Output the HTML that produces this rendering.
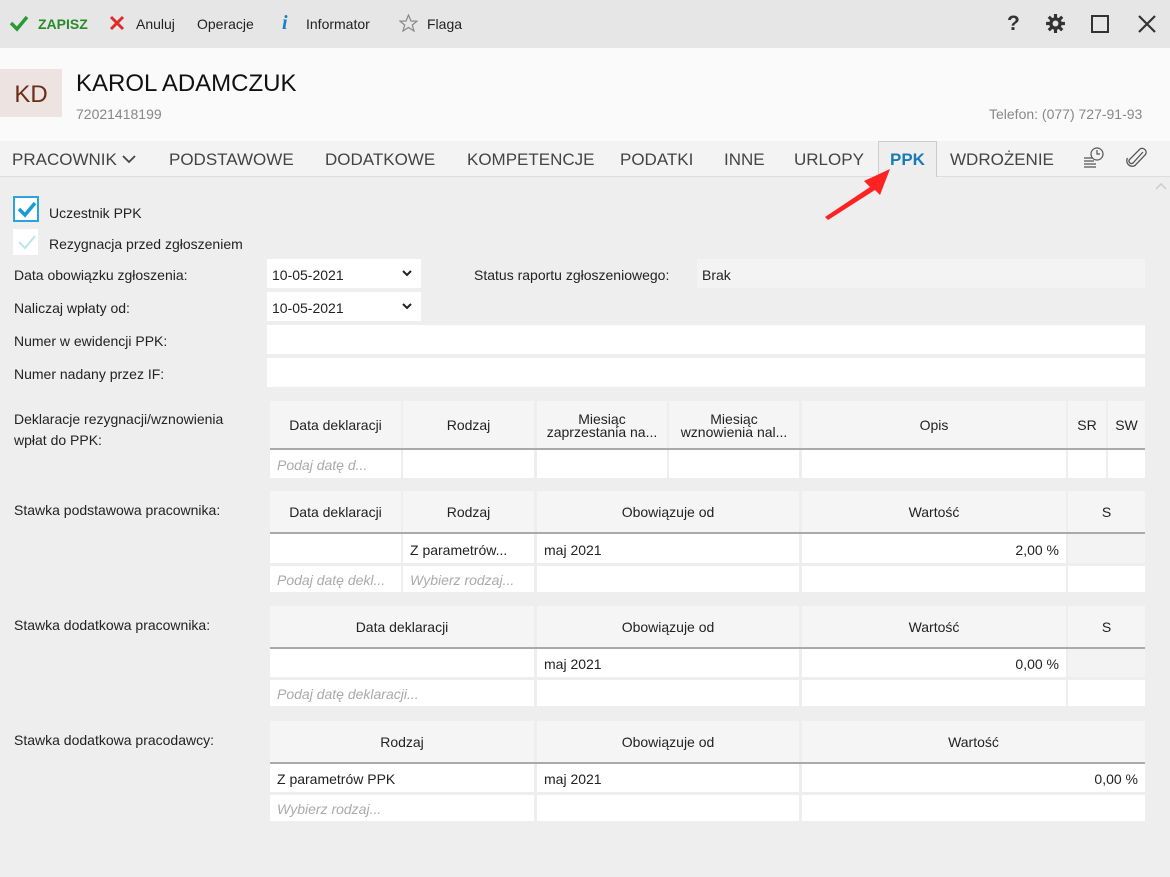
<!DOCTYPE html>
<html><head><meta charset="utf-8"><style>
*{box-sizing:border-box;margin:0;padding:0}
body{width:1170px;height:877px;background:#eeeeee;font-family:"Liberation Sans",sans-serif;font-size:14px;color:#222;position:relative;overflow:hidden}
.a{position:absolute;white-space:nowrap}
.tb{left:0;top:0;width:1170px;height:48px;background:#e6e6e6}
.hd{left:0;top:48px;width:1170px;height:93px;background:#fafafa}
.tabs{left:0;top:141px;width:1170px;height:36px;background:#f3f3f3;border-bottom:1px solid #ddd}
.tab{top:150px;font-size:17px;color:#444}
.c{position:absolute;background:#fff;overflow:hidden;white-space:nowrap;padding:0 7px;display:flex;align-items:center;padding-top:2px}
.h{background:#f5f5f5;justify-content:center;text-align:center;line-height:13px}
.ln{position:absolute;height:2px;background:#aaa}
.ph{color:#aaa;font-style:italic}
.r{justify-content:flex-end}
.g{background:#f3f3f3}
.inp{position:absolute;background:#fff;padding-left:5px;display:flex;align-items:center;padding-top:2px}
</style></head><body>
<div class="a tb"></div>
<svg class="a" style="left:9px;top:14px" width="20" height="18"><path d="M2 9 L8 15 L18 3" stroke="#2a9a35" stroke-width="3.5" fill="none"/></svg>
<div class="a" style="left:38px;top:16px;color:#2a8a2a;font-weight:bold">ZAPISZ</div>
<svg class="a" style="left:109px;top:15px" width="16" height="16"><path d="M2 2L14 14M14 2L2 14" stroke="#e02b2b" stroke-width="3"/></svg>
<div class="a" style="left:136px;top:16px">Anuluj</div>
<div class="a" style="left:197px;top:16px">Operacje</div>
<div class="a" style="left:282px;top:12px;color:#1a7ec0;font-family:'Liberation Serif',serif;font-style:italic;font-weight:bold;font-size:20px">i</div>
<div class="a" style="left:306px;top:16px">Informator</div>
<svg class="a" style="left:399px;top:14px" width="19" height="18"><path d="M9.5 1 L12 7 L18 7.2 L13.3 11 L15 17 L9.5 13.5 L4 17 L5.7 11 L1 7.2 L7 7 Z" stroke="#888" stroke-width="1.2" fill="none"/></svg>
<div class="a" style="left:427px;top:16px">Flaga</div>
<div class="a" style="left:1007px;top:12px;font-size:21px;color:#333;font-weight:bold">?</div>
<svg class="a" style="left:1045px;top:13px" width="21" height="21" viewBox="0 0 20 20"><g stroke="#333" stroke-width="3"><path d="M10 1V19M1 10H19M3.6 3.6L16.4 16.4M16.4 3.6L3.6 16.4"/></g><circle cx="10" cy="10" r="6" fill="#333"/><circle cx="10" cy="10" r="2.8" fill="#e6e6e6"/></svg>
<div class="a" style="left:1091px;top:15px;width:18px;height:18px;border:2.5px solid #333"></div>
<svg class="a" style="left:1138px;top:15px" width="18" height="18"><path d="M1 1L17 17M17 1L1 17" stroke="#333" stroke-width="2.2"/></svg>

<div class="a hd"></div>
<div class="a" style="left:0;top:69px;width:62px;height:48px;background:#ede3e0;color:#6a2e17;font-size:24px;display:flex;align-items:center;justify-content:center;padding-top:4px">KD</div>
<div class="a" style="left:76px;top:70px;font-size:24px;color:#111">KAROL ADAMCZUK</div>
<div class="a" style="left:76px;top:106px;color:#888">72021418199</div>
<div class="a" style="left:989px;top:106px;color:#888">Telefon: (077) 727-91-93</div>

<div class="a tabs"></div>
<div class="a tab" style="left:12px">PRACOWNIK</div>
<svg class="a" style="left:122px;top:155px" width="14" height="9"><path d="M1 1L7 7L13 1" stroke="#444" stroke-width="1.8" fill="none"/></svg>
<div class="a tab" style="left:169px">PODSTAWOWE</div>
<div class="a tab" style="left:325px">DODATKOWE</div>
<div class="a tab" style="left:467px">KOMPETENCJE</div>
<div class="a tab" style="left:620px">PODATKI</div>
<div class="a tab" style="left:724px">INNE</div>
<div class="a tab" style="left:794px">URLOPY</div>
<div class="a" style="left:878px;top:141px;width:59px;height:36px;background:#eeeeee;border:1px solid #ccc;border-bottom:none"></div>
<div class="a tab" style="left:890px;color:#1a7ab5;font-weight:bold">PPK</div>
<div class="a tab" style="left:950px">WDROŻENIE</div>
<svg class="a" style="left:1082px;top:146px" width="24" height="24"><g stroke="#555" stroke-width="1.2" fill="none"><circle cx="15" cy="8" r="6"/><path d="M15 4V8H18M2 12H10M2 15H12M2 18H14M2 21H14"/></g></svg>
<svg class="a" style="left:1125px;top:146px" width="24" height="24"><path d="M18 6 L8 17 A2.5 2.5 0 0 1 4.5 13.5 L15 3 A4 4 0 0 1 20.5 8.5 L10 19.5 A5.5 5.5 0 0 1 2.5 12" stroke="#555" stroke-width="1.3" fill="none"/></svg>
<svg class="a" style="left:1155px;top:182px" width="12" height="8"><path d="M1 7L6 2L11 7" stroke="#ccc" stroke-width="1.5" fill="none"/></svg>
<svg class="a" style="left:820px;top:165px" width="75" height="55"><path d="M5 52 L50 22 L44 16 L70 4 L60 30 L55 25 L8 55 Z" fill="#f22"/></svg>

<div class="a" style="left:13px;top:196px;width:26px;height:26px;border:2px solid #2aa3de;background:#fff"></div>
<svg class="a" style="left:17px;top:200px" width="20" height="18"><path d="M2 9L8 15L18 3" stroke="#1a9ad6" stroke-width="3.5" fill="none"/></svg>
<div class="a" style="left:49px;top:205px">Uczestnik PPK</div>
<div class="a" style="left:13px;top:229px;width:25px;height:26px;background:#fff"></div>
<svg class="a" style="left:17px;top:233px" width="20" height="18"><path d="M2 9L8 15L18 3" stroke="#bde3f2" stroke-width="2" fill="none"/></svg>
<div class="a" style="left:49px;top:236px">Rezygnacja przed zgłoszeniem</div>

<div class="a" style="left:14px;top:267px">Data obowiązku zgłoszenia:</div>
<div class="inp" style="left:267px;top:259px;width:154px;height:29px">10-05-2021</div>
<svg class="a" style="left:402px;top:270px" width="10" height="7"><path d="M1 1L5 5L9 1" stroke="#222" stroke-width="2" fill="none"/></svg>
<div class="a" style="left:474px;top:267px">Status raportu zgłoszeniowego:</div>
<div class="inp" style="left:697px;top:259px;width:448px;height:29px;background:#f3f3f3">Brak</div>
<div class="a" style="left:14px;top:300px">Naliczaj wpłaty od:</div>
<div class="inp" style="left:267px;top:292px;width:154px;height:29px">10-05-2021</div>
<svg class="a" style="left:402px;top:303px" width="10" height="7"><path d="M1 1L5 5L9 1" stroke="#222" stroke-width="2" fill="none"/></svg>
<div class="a" style="left:14px;top:333px">Numer w ewidencji PPK:</div>
<div class="inp" style="left:267px;top:325px;width:878px;height:29px"></div>
<div class="a" style="left:14px;top:366px">Numer nadany przez IF:</div>
<div class="inp" style="left:267px;top:358px;width:878px;height:29px"></div>

<div class="a" style="left:14px;top:409px;line-height:21px">Deklaracje rezygnacji/wznowienia<br>wpłat do PPK:</div>
<div class="c h" style="left:270px;top:401px;width:131px;height:47px">Data deklaracji</div>
<div class="c h" style="left:403px;top:401px;width:131px;height:47px">Rodzaj</div>
<div class="c h" style="left:537px;top:401px;width:130px;height:47px">Miesiąc<br>zaprzestania na...</div>
<div class="c h" style="left:669px;top:401px;width:130px;height:47px">Miesiąc<br>wznowienia nal...</div>
<div class="c h" style="left:802px;top:401px;width:264px;height:47px">Opis</div>
<div class="c h" style="left:1068px;top:401px;width:38px;height:47px">SR</div>
<div class="c h" style="left:1108px;top:401px;width:37px;height:47px">SW</div>
<div class="ln" style="left:270px;top:448px;width:875px"></div>
<div class="c ph" style="left:270px;top:450px;width:131px;height:28px">Podaj datę d...</div>
<div class="c" style="left:403px;top:450px;width:131px;height:28px"></div>
<div class="c" style="left:537px;top:450px;width:130px;height:28px"></div>
<div class="c" style="left:669px;top:450px;width:130px;height:28px"></div>
<div class="c" style="left:802px;top:450px;width:264px;height:28px"></div>
<div class="c" style="left:1068px;top:450px;width:38px;height:28px"></div>
<div class="c" style="left:1108px;top:450px;width:37px;height:28px"></div>

<div class="a" style="left:14px;top:502px">Stawka podstawowa pracownika:</div>
<div class="c h" style="left:270px;top:491px;width:131px;height:41px">Data deklaracji</div>
<div class="c h" style="left:403px;top:491px;width:131px;height:41px">Rodzaj</div>
<div class="c h" style="left:537px;top:491px;width:262px;height:41px">Obowiązuje od</div>
<div class="c h" style="left:802px;top:491px;width:264px;height:41px">Wartość</div>
<div class="c h" style="left:1068px;top:491px;width:77px;height:41px">S</div>
<div class="ln" style="left:270px;top:532px;width:875px"></div>
<div class="c" style="left:270px;top:534px;width:131px;height:29px"></div>
<div class="c" style="left:403px;top:534px;width:131px;height:29px">Z parametrów...</div>
<div class="c" style="left:537px;top:534px;width:262px;height:29px">maj 2021</div>
<div class="c r" style="left:802px;top:534px;width:264px;height:29px">2,00 %</div>
<div class="c g" style="left:1068px;top:534px;width:77px;height:29px"></div>
<div class="c ph" style="left:270px;top:566px;width:131px;height:26px">Podaj datę dekl...</div>
<div class="c ph" style="left:403px;top:566px;width:131px;height:26px">Wybierz rodzaj...</div>
<div class="c" style="left:537px;top:566px;width:262px;height:26px"></div>
<div class="c" style="left:802px;top:566px;width:264px;height:26px"></div>
<div class="c" style="left:1068px;top:566px;width:77px;height:26px"></div>

<div class="a" style="left:14px;top:617px">Stawka dodatkowa pracownika:</div>
<div class="c h" style="left:270px;top:606px;width:264px;height:41px">Data deklaracji</div>
<div class="c h" style="left:537px;top:606px;width:262px;height:41px">Obowiązuje od</div>
<div class="c h" style="left:802px;top:606px;width:264px;height:41px">Wartość</div>
<div class="c h" style="left:1068px;top:606px;width:77px;height:41px">S</div>
<div class="ln" style="left:270px;top:647px;width:875px"></div>
<div class="c" style="left:270px;top:649px;width:264px;height:28px"></div>
<div class="c" style="left:537px;top:649px;width:262px;height:28px">maj 2021</div>
<div class="c r" style="left:802px;top:649px;width:264px;height:28px">0,00 %</div>
<div class="c g" style="left:1068px;top:649px;width:77px;height:28px"></div>
<div class="c ph" style="left:270px;top:680px;width:264px;height:26px">Podaj datę deklaracji...</div>
<div class="c" style="left:537px;top:680px;width:262px;height:26px"></div>
<div class="c" style="left:802px;top:680px;width:264px;height:26px"></div>
<div class="c" style="left:1068px;top:680px;width:77px;height:26px"></div>

<div class="a" style="left:14px;top:732px">Stawka dodatkowa pracodawcy:</div>
<div class="c h" style="left:270px;top:721px;width:264px;height:41px">Rodzaj</div>
<div class="c h" style="left:537px;top:721px;width:262px;height:41px">Obowiązuje od</div>
<div class="c h" style="left:802px;top:721px;width:343px;height:41px">Wartość</div>
<div class="ln" style="left:270px;top:762px;width:875px"></div>
<div class="c" style="left:270px;top:764px;width:264px;height:28px">Z parametrów PPK</div>
<div class="c" style="left:537px;top:764px;width:262px;height:28px">maj 2021</div>
<div class="c r" style="left:802px;top:764px;width:343px;height:28px">0,00 %</div>
<div class="c ph" style="left:270px;top:795px;width:264px;height:26px">Wybierz rodzaj...</div>
<div class="c" style="left:537px;top:795px;width:262px;height:26px"></div>
<div class="c" style="left:802px;top:795px;width:343px;height:26px"></div>
</body></html>
